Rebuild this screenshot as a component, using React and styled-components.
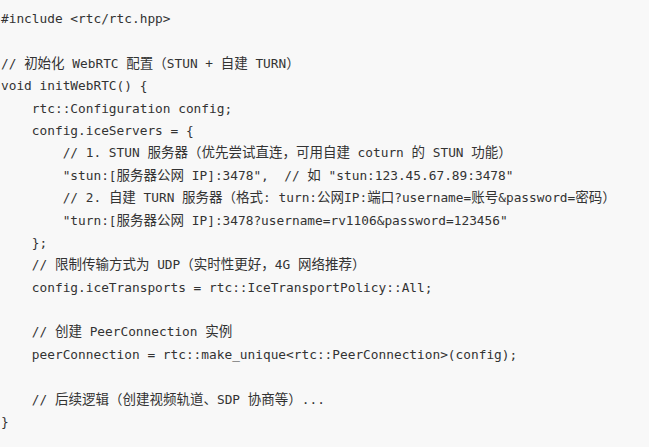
import React from "react";
import styled, { createGlobalStyle } from "styled-components";

const GlobalStyle = createGlobalStyle`
  html, body {
    margin: 0;
    padding: 0;
    background: #f8f8f8;
  }
  body {
    width: 649px;
    height: 447px;
    overflow: hidden;
  }
`;

const CodeBlock = styled.pre`
  margin: 0;
  padding: 8px 0 0 1px;
  background: #f8f8f8;
  color: #333333;
  font-family: "DejaVu Sans Mono", "Noto Sans CJK SC", monospace;
  font-size: 12.8px;
  line-height: 22.4px;
`;

const Line = styled.div`
  height: 22.4px;
  white-space: pre;
`;

const Han = styled.span`
  font-family: "Noto Sans CJK SC", sans-serif;
  font-size: 13.5px;
  line-height: 1;
`;

const CODE = [
  "#include <rtc/rtc.hpp>",
  "",
  "// 初始化 WebRTC 配置（STUN + 自建 TURN）",
  "void initWebRTC() {",
  "    rtc::Configuration config;",
  "    config.iceServers = {",
  "        // 1. STUN 服务器（优先尝试直连，可用自建 coturn 的 STUN 功能）",
  '        "stun:[服务器公网 IP]:3478",  // 如 "stun:123.45.67.89:3478"',
  "        // 2. 自建 TURN 服务器（格式: turn:公网IP:端口?username=账号&password=密码）",
  '        "turn:[服务器公网 IP]:3478?username=rv1106&password=123456"',
  "    };",
  "    // 限制传输方式为 UDP（实时性更好，4G 网络推荐）",
  "    config.iceTransports = rtc::IceTransportPolicy::All;",
  "",
  "    // 创建 PeerConnection 实例",
  "    peerConnection = rtc::make_unique<rtc::PeerConnection>(config);",
  "",
  "    // 后续逻辑（创建视频轨道、SDP 协商等）...",
  "}",
];

const HAN_RE = /([\u3000-\u303f\u4e00-\u9fff\uff00-\uffef]+)/;

function renderLine(text) {
  return text.split(HAN_RE).map((part, i) =>
    i % 2 === 1 ? <Han key={i}>{part}</Han> : part
  );
}

export default function App() {
  return (
    <>
      <GlobalStyle />
      <CodeBlock>
        {CODE.map((l, i) => (
          <Line key={i}>{renderLine(l)}</Line>
        ))}
      </CodeBlock>
    </>
  );
}
